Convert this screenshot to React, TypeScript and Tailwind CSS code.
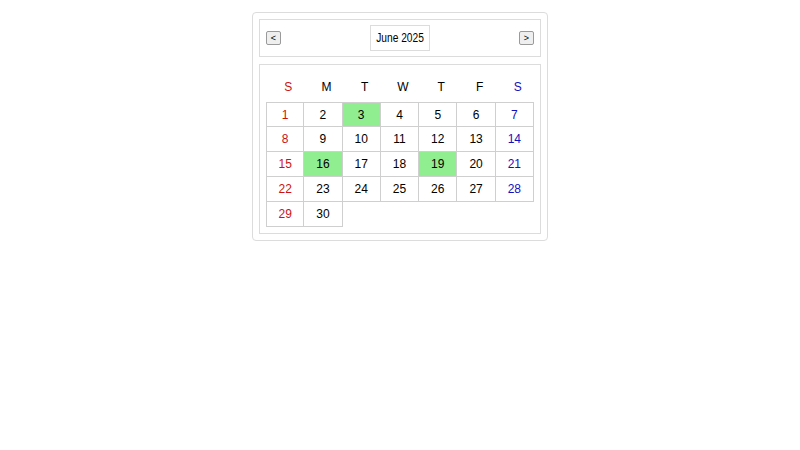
import { useState } from "react";

const WEEKDAYS = ["S", "M", "T", "W", "T", "F", "S"];
const MONTHS = [
  "January", "February", "March", "April", "May", "June",
  "July", "August", "September", "October", "November", "December",
];

// days that carry a booking, keyed by "year-month"
const MARKED: Record<string, number[]> = { "2025-5": [3, 16, 19] };

function dayColor(col: number) {
  if (col === 0) return "text-[#cc1111]";
  if (col === 6) return "text-[#1111bb]";
  return "text-black";
}

export default function App() {
  const [year, setYear] = useState(2025);
  const [month, setMonth] = useState(5);

  const first = new Date(year, month, 1).getDay();
  const total = new Date(year, month + 1, 0).getDate();
  const marked = MARKED[`${year}-${month}`] ?? [];

  const cells: (number | null)[] = [];
  for (let i = 0; i < first; i++) cells.push(null);
  for (let d = 1; d <= total; d++) cells.push(d);

  function shift(delta: number) {
    const m = month + delta;
    setYear(year + Math.floor(m / 12));
    setMonth(((m % 12) + 12) % 12);
  }

  const navBtn =
    "h-[14px] w-[15px] rounded-[2px] border border-[#9a9a9a] bg-[#efefef] text-[9px] leading-none text-black flex items-center justify-center";

  return (
    <div className="min-h-[450px] bg-white font-['Liberation_Sans',Arial,sans-serif] text-[12px] text-black">
      <div className="mx-auto mt-[12px] flex w-[296px] flex-col gap-[7px] rounded-[4px] border border-[#dcdcdc] p-[6px]">
        <div className="flex h-[38px] items-center justify-between border border-[#dcdcdc] px-[6px]">
          <button onClick={() => shift(-1)} className={navBtn}>
            &lt;
          </button>
          <div className="flex h-[26px] w-[60px] items-center justify-center border border-[#dcdcdc]">
            <span className="inline-block scale-x-[0.85] whitespace-nowrap">
              {MONTHS[month]} {year}
            </span>
          </div>
          <button onClick={() => shift(1)} className={navBtn}>
            &gt;
          </button>
        </div>

        <div className="border border-[#dcdcdc] p-[6px]">
          <div className="ml-[3px] mr-[-3px] grid h-[31px] grid-cols-7 items-center text-center">
            {WEEKDAYS.map((w, i) => (
              <span key={i} className={dayColor(i)}>
                {w}
              </span>
            ))}
          </div>
          <div className="grid grid-cols-7">
            {cells.map((d, i) =>
              d === null ? (
                <div key={i} />
              ) : (
                <div
                  key={i}
                  className={`flex h-[25px] items-center justify-center border-b border-r border-[#cfcfcf] ${
                    i % 7 === 0 ? "border-l" : ""
                  } ${i < 7 ? "border-t" : ""} ${
                    marked.includes(d) ? "bg-[#90ee90]" : "bg-white"
                  } ${dayColor(i % 7)}`}
                >
                  {d}
                </div>
              )
            )}
          </div>
        </div>
      </div>
    </div>
  );
}
